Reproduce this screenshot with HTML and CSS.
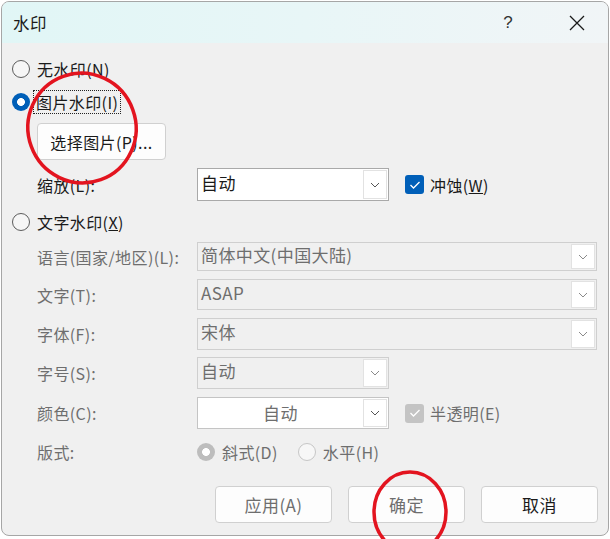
FILE: index.html
```html
<!DOCTYPE html>
<html lang="zh-CN">
<head>
<meta charset="utf-8">
<title>水印</title>
<link rel="stylesheet" href="styles.css">
</head>
<body>
<div class="dialog">
  <div class="titlebar">
    <span class="title">水印</span>
    <span class="help">?</span>
    <span class="close"><svg width="16" height="16" viewBox="0 0 16 16"><path d="M1 1L15 15M15 1L1 15" stroke="#1a1a1a" stroke-width="1.3" fill="none"/></svg></span>
  </div>
  <div class="content">
    <div class="radio-row">
      <span class="radio"></span><span class="rlabel">无水印(N)</span>
    </div>
    <div class="radio-row row2">
      <span class="radio checked"></span><span class="rlabel focus">图片水印(I)</span>
    </div>
    <div class="pick-btn">选择图片(P)...</div>
    <div class="field scale">
      <span class="flabel dark">缩放(L):</span>
      <div class="combo short enabled"><span class="ctext">自动</span><span class="drop"><svg width="10" height="6" viewBox="0 0 10 6"><path d="M1 1L5 5L9 1" stroke="#555" stroke-width="1" fill="none"/></svg></span></div>
      <div class="check-wrap"><span class="check on"><svg width="12" height="10" viewBox="0 0 12 10"><path d="M1.5 5L4.5 8L10.5 2" stroke="#fff" stroke-width="1.3" fill="none"/></svg></span><span class="clabel">冲蚀(<u>W</u>)</span></div>
    </div>
    <div class="radio-row row3">
      <span class="radio"></span><span class="rlabel">文字水印(<u>X</u>)</span>
    </div>
    <div class="field lang">
      <span class="flabel">语言(国家/地区)(L):</span>
      <div class="combo full"><span class="ctext">简体中文(中国大陆)</span><span class="drop"><svg width="10" height="6" viewBox="0 0 10 6"><path d="M1 1L5 5L9 1" stroke="#8a8a8a" stroke-width="1" fill="none"/></svg></span></div>
    </div>
    <div class="field txt">
      <span class="flabel">文字(T):</span>
      <div class="combo full tall"><span class="ctext">ASAP</span><span class="drop"><svg width="10" height="6" viewBox="0 0 10 6"><path d="M1 1L5 5L9 1" stroke="#8a8a8a" stroke-width="1" fill="none"/></svg></span></div>
    </div>
    <div class="field fnt">
      <span class="flabel">字体(F):</span>
      <div class="combo full tall"><span class="ctext">宋体</span><span class="drop"><svg width="10" height="6" viewBox="0 0 10 6"><path d="M1 1L5 5L9 1" stroke="#8a8a8a" stroke-width="1" fill="none"/></svg></span></div>
    </div>
    <div class="field size">
      <span class="flabel">字号(S):</span>
      <div class="combo short tall"><span class="ctext">自动</span><span class="drop"><svg width="10" height="6" viewBox="0 0 10 6"><path d="M1 1L5 5L9 1" stroke="#8a8a8a" stroke-width="1" fill="none"/></svg></span></div>
    </div>
    <div class="field color">
      <span class="flabel">颜色(C):</span>
      <div class="combo short tall white"><span class="ctext center">自动</span><span class="drop"><svg width="10" height="6" viewBox="0 0 10 6"><path d="M1 1L5 5L9 1" stroke="#555" stroke-width="1" fill="none"/></svg></span></div>
      <div class="check-wrap"><span class="check dis"><svg width="12" height="10" viewBox="0 0 12 10"><path d="M1.5 5L4.5 8L10.5 2" stroke="#fff" stroke-width="1.3" fill="none"/></svg></span><span class="clabel grey">半透明(E)</span></div>
    </div>
    <div class="field layout">
      <span class="flabel">版式:</span>
      <div class="opts">
        <span class="radio dis-checked"></span><span class="olabel">斜式(D)</span>
        <span class="radio dis gap"></span><span class="olabel">水平(H)</span>
      </div>
    </div>
    <div class="buttons">
      <div class="btn grey">应用(A)</div>
      <div class="btn grey">确定</div>
      <div class="btn">取消</div>
    </div>
  </div>
  <svg class="marks" width="610" height="539" viewBox="0 0 610 539">
    <ellipse cx="82" cy="128" rx="54" ry="55" transform="rotate(-20 82 128)" stroke="#e3141f" stroke-width="3.5" fill="none"/>
    <ellipse cx="410" cy="512" rx="36" ry="40" stroke="#e3141f" stroke-width="3.5" fill="none"/>
  </svg>
</div>
</body>
</html>
```
FILE: styles.css
```css
html, body {
  margin: 0;
  padding: 0;
  background: #ffffff;
}
body {
  width: 610px;
  height: 539px;
  overflow: hidden;
  font-family: "Noto Sans CJK SC", "Noto Sans", sans-serif;
  font-size: 16px;
  letter-spacing: 0.4px;
  color: #1a1a1a;
}
.dialog {
  margin: 1px 0 0 1px;
  width: 608px;
  height: 535px;
  box-sizing: border-box;
  border: 1px solid #a6a6a6;
  border-radius: 8px;
  background: #f0f0f0;
  overflow: hidden;
}
.titlebar {
  height: 41px;
  display: flex;
  align-items: center;
  background: linear-gradient(90deg, #e1f6f6 0%, #e8f6f7 50%, #f1f5f7 100%);
}
.title {
  margin-left: 11px;
  font-size: 16.5px;
  color: #1a1a1a;
  flex: 1;
}
.help {
  font-family: "Liberation Sans", sans-serif;
  font-size: 17px;
  color: #333;
  margin-right: 56px;
}
.close {
  display: flex;
  margin-right: 23px;
}
.content {
  padding: 13px 10px 0 10px;
  display: flex;
  flex-direction: column;
}
.radio-row {
  height: 26px;
  display: flex;
  align-items: center;
}
.row2 { margin-top: 7px; }
.row3 { margin-top: 8px; }
.radio {
  width: 18px;
  height: 18px;
  box-sizing: border-box;
  border: 1px solid #5c5c5c;
  border-radius: 50%;
  background: #f6f6f6;
  flex: none;
}
.radio.checked {
  border: none;
  background: radial-gradient(circle, #ffffff 0 3.6px, #005fb8 4.2px);
}
.radio.dis-checked {
  border: none;
  background: radial-gradient(circle, #ffffff 0 3.6px, #bdbdbd 4.2px);
}
.radio.dis {
  border: 1px solid #c6c6c6;
  background: #f7f7f7;
}
.rlabel {
  margin-left: 7px;
  line-height: 22px;
}
.rlabel.focus {
  margin-left: 4px;
  padding: 0 2px 0 2px;
  outline: 1px dotted #222;
}
.pick-btn {
  margin-top: 8px;
  margin-left: 25px;
  width: 129px;
  height: 37px;
  box-sizing: border-box;
  border: 1px solid #d0d0d0;
  border-radius: 4px;
  background: #fdfdfd;
  display: flex;
  align-items: center;
  justify-content: center;
  color: #1a1a1a;
}
.field {
  margin-left: 25px;
  display: flex;
  align-items: center;
}
.flabel {
  width: 160px;
  flex: none;
  color: #6e6e6e;
}
.flabel.dark { color: #1a1a1a; }
.scale { margin-top: 8px; height: 33px; }
.lang { margin-top: 7px; height: 29px; }
.txt { margin-top: 8px; height: 31px; }
.fnt { margin-top: 8px; height: 32px; }
.size { margin-top: 7px; height: 32px; }
.color { margin-top: 8px; height: 32px; }
.layout { margin-top: 10px; height: 26px; }
.combo {
  height: 100%;
  box-sizing: border-box;
  border: 1px solid #cfcfcf;
  background: #f0f0f0;
  display: flex;
  align-items: center;
  color: #6e6e6e;
}
.combo.full { width: 400px; }
.combo.short { width: 192px; }
.combo.enabled {
  border-color: #a9a9a9;
  background: #ffffff;
  color: #1a1a1a;
}
.combo.white {
  border-color: #c4c4c4;
  background: #ffffff;
  color: #6e6e6e;
}
.ctext {
  flex: 1;
  padding-left: 3px;
  font-size: 17px;
  line-height: 20px;
  margin-top: -4px;
}
.ctext.center {
  text-align: center;
  padding-left: 0;
  margin-top: 0;
}
.drop {
  width: 24px;
  align-self: stretch;
  margin: 1px 1px 1px 0;
  box-sizing: border-box;
  border: 1px solid #e2e2e2;
  background: #ffffff;
  display: flex;
  align-items: center;
  justify-content: center;
}
.check-wrap {
  margin-left: 16px;
  display: flex;
  align-items: center;
}
.check {
  width: 19px;
  height: 19px;
  border-radius: 3px;
  display: flex;
  align-items: center;
  justify-content: center;
}
.check.on { background: #005fb8; }
.check.dis { background: #c4c4c4; }
.clabel {
  margin-left: 6px;
  color: #1a1a1a;
}
.clabel.grey { color: #6e6e6e; }
.opts {
  display: flex;
  align-items: center;
  color: #6e6e6e;
}
.olabel { margin-left: 7px; }
.radio.gap { margin-left: 20px; }
.buttons {
  margin-top: 21px;
  display: flex;
  justify-content: flex-end;
  gap: 16px;
}
.btn {
  width: 117px;
  height: 37px;
  box-sizing: border-box;
  border: 1px solid #d0d0d0;
  border-radius: 4px;
  background: #fdfdfd;
  display: flex;
  align-items: center;
  justify-content: center;
  font-size: 17px;
  color: #1a1a1a;
}
.btn.grey { color: #6e6e6e; }
.marks {
  position: absolute;
  left: 0;
  top: 0;
  pointer-events: none;
}
```
